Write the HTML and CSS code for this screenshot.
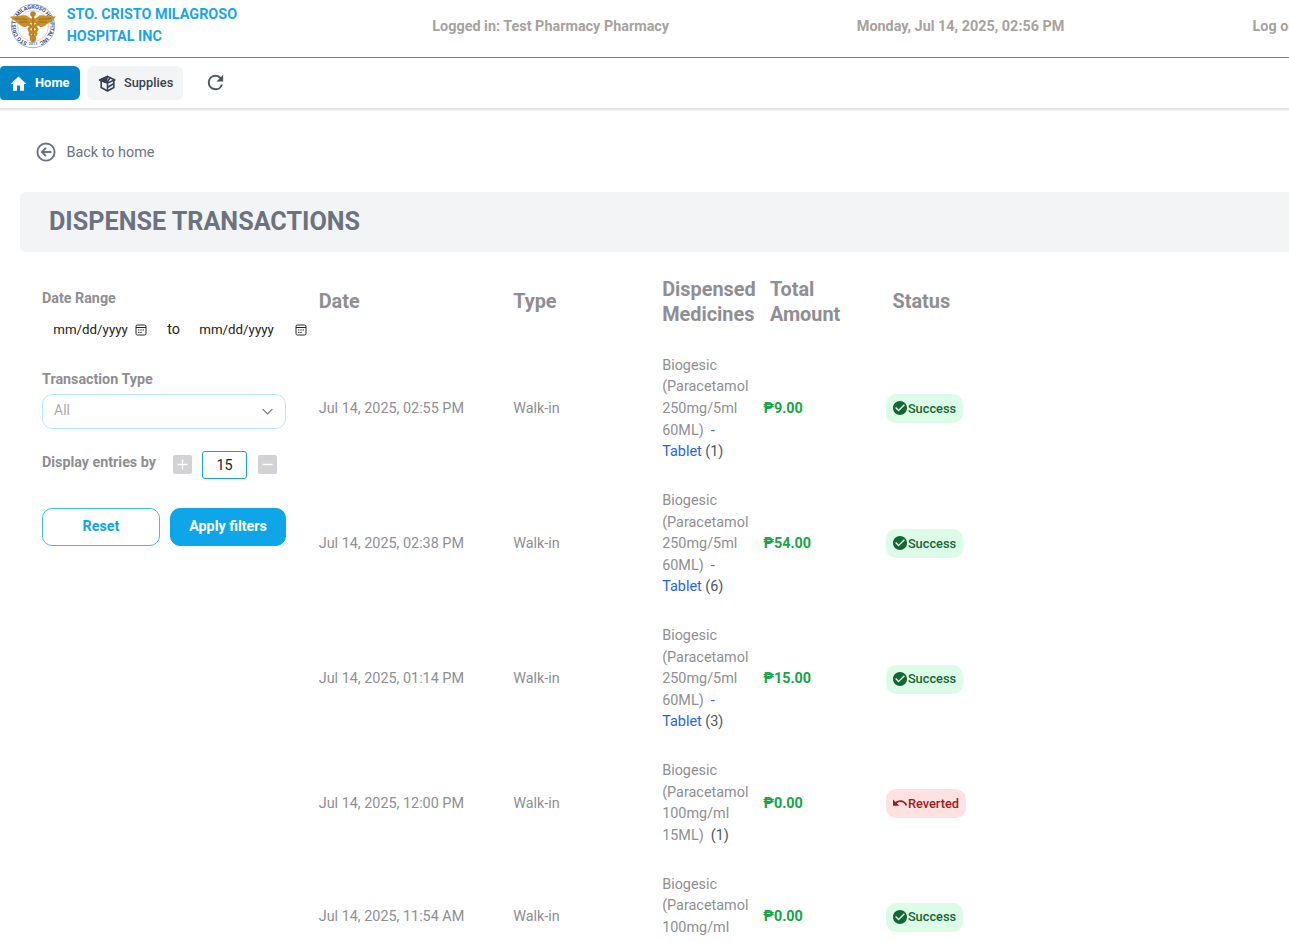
FILE: index.html
```html
<!DOCTYPE html>
<html lang="en">
<head>
<meta charset="utf-8">
<title>Dispense Transactions</title>
<link rel="stylesheet" href="styles.css">
</head>
<body>
<svg class="defs" width="0" height="0" aria-hidden="true">
  <symbol id="check" viewBox="2 2 20 20"><path d="M12 2C6.48 2 2 6.48 2 12s4.480 10 10 10 10-4.480 10-10S17.520 2 12 2zm-2 15l-5-5 1.410-1.410L10 14.170l7.590-7.590L19 8l-9 9z"/></symbol>
  <symbol id="undo" viewBox="2 2 20 20"><path d="M12.500 8c-2.650 0-5.050.990-6.900 2.600L2 7v9h9l-3.620-3.620c1.390-1.160 3.160-1.880 5.120-1.880 3.540 0 6.550 2.310 7.600 5.500l2.370-.780C21.080 11.030 17.150 8 12.500 8z"/></symbol>
  <symbol id="calendar" viewBox="0 0 12 12"><rect x="1" y="1" width="10" height="10" rx="1.4" fill="none" stroke="#222"/><path d="M1 3.500h10" stroke="#222"/><path d="M3 6h1.400M5.300 6h1.400M7.600 6H9M3 8.500h1.400M5.300 8.500h1.400" stroke="#222" stroke-width="1.1"/></symbol>
</svg>
<header class="topbar">
  <div class="brand">
    <svg class="logo" viewBox="0 0 48 48">
      <circle cx="24" cy="24" r="21.7" fill="#fff" stroke="#8b9cc4" stroke-width=".8"/>
      <circle cx="24" cy="24" r="15.5" fill="#fff" stroke="#e2a5a5" stroke-width=".6"/>
      <path id="ring" d="M18.300 40.200A17.200 17.200 0 1 1 30 40.100" fill="none"/>
      <text class="ring-text"><textPath href="#ring" textLength="95">STO CRISTO MILAGROSO HOSPITAL INC</textPath></text>
      <text class="year" x="24" y="43.200">2011</text>
      <path d="M1 14.500C7 15 12 12.500 17.500 13.500L22 16.500h4l4.500-3C36 12.500 41 15 47 14.500c-2 3-4 3.500-5 4-1 2.500-3 3-4 3.500-2 2.500-5 3-7 3l-4.500-4h-5l-4.500 4c-2 0-5-.5-7-3-1-.5-3-1-4-3.500-1-.5-3-1-5-4z" fill="#c8922b"/>
      <path d="M6 16.500c5 1 9 0 12 1M42 16.500c-5 1-9 0-12 1M10 20c4 .5 7-.5 9 0M38 20c-4 .5-7-.5-9 0" fill="none" stroke="#8e5d12" stroke-width=".8"/>
      <path d="M24 13v26" stroke="#b67c1b" stroke-width="2.400"/>
      <path d="M20 20c-6 4 10 4 8 8s-9 1-7 5 6 1 5 4-2 2-2 2M28 20c6 4-10 4-8 8s9 1 7 5-6 1-5 4 2 2 2 2" fill="none" stroke="#c28a25" stroke-width="2.500"/>
      <circle cx="24" cy="12" r="2.800" fill="#bd8422"/>
    </svg>
    <div class="brand-name">STO. CRISTO MILAGROSO<br>HOSPITAL INC</div>
  </div>
  <div class="user">Logged in: Test Pharmacy Pharmacy</div>
  <div class="clock">Monday, Jul 14, 2025, 02:56 PM</div>
  <div class="logout">Log out</div>
</header>
<nav class="nav">
  <a class="tab tab-home"><svg class="tab-icon" viewBox="0 0 24 24"><path fill="currentColor" d="M10 21v-6.500h4V21h5v-8.500h3L12 3 2 12.500h3V21z"/></svg>Home</a>
  <a class="tab tab-supplies"><svg class="tab-icon" viewBox="0 0 24 24" fill="none" stroke="currentColor" stroke-width="2" stroke-linejoin="round"><path d="M12 3l8 4v10l-8 4.500L4 17V7z"/><path d="M2 7.500L12 3l-2 7.500z" fill="currentColor"/><path d="M2 7.500l10 4L22 7M12 11.500v10M15.500 4.500L11 11M12 17l8-5"/></svg>Supplies</a>
  <svg class="refresh" viewBox="0 0 24 24"><path fill="currentColor" d="M17.650 6.350A7.958 7.958 0 0 0 12 4a8 8 0 1 0 7.730 10h-2.080A6 6 0 1 1 12 6c1.660 0 3.140.690 4.220 1.780L13 11h7V4z"/></svg>
</nav>
<main class="main">
  <a class="back"><svg class="back-icon" viewBox="0 0 24 24" fill="none" stroke="currentColor" stroke-width="2.300"><circle cx="12" cy="12" r="10.300"/><path d="M18.500 12H7M12 7l-5 5 5 5"/></svg>Back to home</a>
  <h1 class="title">DISPENSE TRANSACTIONS</h1>
  <div class="content">
    <aside class="filters">
      <div class="label">Date Range</div>
      <div class="dates">
        <span class="date">mm/dd/yyyy</span><svg class="cal"><use href="#calendar"/></svg>
        <span class="to">to</span>
        <span class="date date-end">mm/dd/yyyy</span><svg class="cal"><use href="#calendar"/></svg>
      </div>
      <div class="label">Transaction Type</div>
      <div class="select">All<svg class="chevron" viewBox="0 0 12 12"><path d="M1.500 3.800L6 8.200l4.500-4.400" fill="none" stroke="#777" stroke-width="1.200"/></svg></div>
      <div class="entries">
        <span class="label entries-label">Display entries by</span>
        <svg class="step" viewBox="0 0 19 19"><path d="M4.500 9.500h10M9.500 4.500v10"/></svg>
        <span class="count">15</span>
        <svg class="step" viewBox="0 0 19 19"><path d="M4.500 9.500h10"/></svg>
      </div>
      <div class="actions"><button class="btn">Reset</button><button class="btn btn-primary">Apply filters</button></div>
    </aside>
    <section class="table">
      <div class="row head"><div class="head-single">Date</div><div class="head-single">Type</div><div>Dispensed Medicines</div><div class="head-total">Total<br>Amount</div><div class="head-single head-status">Status</div></div>
      <div class="row"><div>Jul 14, 2025, 02:55 PM</div><div>Walk-in</div><div>Biogesic<br>(Paracetamol<br>250mg/5ml<br>60ML) &nbsp;<span class="unit">-<br>Tablet</span> <span class="qty">(1)</span></div><div class="amount">₱9.00</div><div><span class="badge"><svg class="badge-icon"><use href="#check"/></svg>Success</span></div></div>
      <div class="row"><div>Jul 14, 2025, 02:38 PM</div><div>Walk-in</div><div>Biogesic<br>(Paracetamol<br>250mg/5ml<br>60ML) &nbsp;<span class="unit">-<br>Tablet</span> <span class="qty">(6)</span></div><div class="amount">₱54.00</div><div><span class="badge"><svg class="badge-icon"><use href="#check"/></svg>Success</span></div></div>
      <div class="row"><div>Jul 14, 2025, 01:14 PM</div><div>Walk-in</div><div>Biogesic<br>(Paracetamol<br>250mg/5ml<br>60ML) &nbsp;<span class="unit">-<br>Tablet</span> <span class="qty">(3)</span></div><div class="amount">₱15.00</div><div><span class="badge"><svg class="badge-icon"><use href="#check"/></svg>Success</span></div></div>
      <div class="row"><div>Jul 14, 2025, 12:00 PM</div><div>Walk-in</div><div>Biogesic<br>(Paracetamol<br>100mg/ml<br>15ML) &nbsp;<span class="qty">(1)</span></div><div class="amount">₱0.00</div><div><span class="badge badge-reverted"><svg class="badge-icon"><use href="#undo"/></svg>Reverted</span></div></div>
      <div class="row"><div>Jul 14, 2025, 11:54 AM</div><div>Walk-in</div><div>Biogesic<br>(Paracetamol<br>100mg/ml<br>&nbsp;</div><div class="amount">₱0.00</div><div><span class="badge"><svg class="badge-icon"><use href="#check"/></svg>Success</span></div></div>
    </section>
  </div>
</main>
</body>
</html>
```
FILE: styles.css
```css
* { box-sizing: border-box; }
body {
  margin: 0;
  height: 942px;
  overflow: hidden;
  background: #fff;
  color: #8e8e93;
  font: 14.4px/21.6px Roboto, sans-serif;
}
.defs { display: block; width: 0; height: 0; }
svg { flex: none; }
.topbar {
  display: grid;
  grid-template-columns: 432.3px 424.5px 395.7px 100px;
  height: 58px;
  border-bottom: 1px solid #1c9fd4;
  color: #a8a29e;
  font-weight: 700;
  white-space: nowrap;
}
.user, .clock, .logout { padding-top: 16px; }
.brand { display: flex; padding: 2px 0 0 9px; }
.logo { width: 48px; height: 48px; }
.ring-text { font: 700 5.400px Roboto, sans-serif; fill: #344c8c; }
.year { font: 700 4px Roboto, sans-serif; fill: #587baa; text-anchor: middle; }
.brand-name { margin-left: 9.700px; padding-top: 2px; color: #1ba5e6; }
.nav {
  display: flex;
  align-items: center;
  height: 52px;
  border-bottom: 2px solid #e5e5e5;
  box-shadow: 0 1px 1px #f4f4f4;
}
.tab {
  display: flex;
  align-items: center;
  height: 34px;
  border-radius: 6px;
  font-size: 13px;
  font-weight: 500;
}
.tab-icon { width: 19px; height: 19px; margin-right: 7px; }
.tab-home { width: 80px; padding-left: 9px; background: #0284c7; color: #fff; border-radius: 4px 6px 6px 4px; font-weight: 700; font-size: 12.900px; }
.tab-supplies { width: 96px; margin-left: 7px; padding-left: 11px; background: #f3f4f6; color: #374151; font-size: 12.800px; }
.refresh { width: 23px; height: 23px; margin: 0 0 1px 21px; color: #4b5563; }
.main { padding: 31px 0 0 20px; }
.back { display: flex; align-items: center; height: 22px; padding-top: 1px; margin-left: 15.500px; color: #6b7280; }
.back-icon { width: 20px; height: 20px; margin: 0 11px 1px 0; }
.title {
  height: 60px;
  margin: 29px 0 0;
  padding-left: 29px;
  border-radius: 6px 0 0 6px;
  background: #f3f4f6;
  color: #6b7280;
  font-size: 25.200px;
  line-height: 59px;
}
.content { display: flex; padding-left: 22px; }
.filters { width: 276.700px; padding-top: 36px; }
.label { font-weight: 700; font-size: 14.300px; }
.dates { display: flex; align-items: center; height: 22px; margin: 9px 0 28px; padding-left: 11.300px; color: #222; font-size: 13.300px; }
.date { width: 82px; }
.date-end { width: 96px; }
.cal { width: 12px; height: 12px; }
.to { width: 32px; margin-left: 20px; font-size: 14.400px; }
.select {
  display: flex;
  align-items: center;
  justify-content: space-between;
  width: 244px;
  height: 35px;
  margin-top: 4px;
  padding: 0 11.500px 1px 11px;
  border: 1px solid #bae6fd;
  border-radius: 10px;
  color: #aaa;
  font-size: 14px;
}
.chevron { width: 13px; height: 13px; }
.entries { display: flex; align-items: center; height: 28px; margin-top: 22px; }
.entries-label { width: 131px; padding-bottom: 5px; }
.step { width: 19px; height: 19px; margin-bottom: 1px; border-radius: 2px; background: #d1d1d6; stroke: #fff; stroke-width: 1.400; }
.count { width: 45px; height: 28px; margin: 0 11px 0 10px; border: 1px solid #0ea5e9; border-radius: 3px; color: #222; line-height: 27px; text-align: center; }
.actions { display: flex; gap: 10px; margin-top: 29px; }
.btn { width: 118px; height: 38px; padding: 0 0 2px; border: 1px solid #38bdf8; border-radius: 10px; background: #fff; color: #0ea5e9; font: 700 14.300px Roboto, sans-serif; }
.btn-primary { width: 116px; border-color: #0ea5e9; background: #0ea5e9; color: #fff; }
.row { display: grid; grid-template-columns: 194.500px 149px 101px 122.700px 120px; align-items: center; padding: 13.500px 0 13.700px; }
.head { height: 89.300px; padding: 12px 0 0; font-size: 19.850px; line-height: 25px; font-weight: 700; }
.head > div { padding-bottom: 1px; }
.head > .head-single { padding-bottom: 2px; }
.head-total, .head-status { padding-left: 6.700px; }
.unit { color: #2563eb; }
.qty { color: #4b5563; }
.amount { color: #16a34a; font-weight: 700; }
.badge { display: inline-flex; align-items: center; height: 29px; padding: 0 7px; border-radius: 10px; background: #dcfce7; color: #166534; font-size: 12.800px; font-weight: 500; vertical-align: middle; }
.badge-icon { width: 14px; height: 14px; margin: 0 .5px 1px; fill: currentColor; }
.badge-reverted { background: #fee2e2; color: #991b1b; }
```
